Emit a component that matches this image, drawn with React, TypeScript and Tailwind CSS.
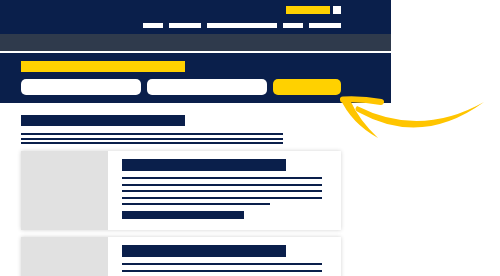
const navy = 'bg-[#0a1f4b]';

const Line = ({ w }: { w: string }) => <div className={`h-[2px] ${navy} ${w}`} />;

const ResultCard = () => (
  <div className="flex w-[320px] h-[79px] bg-white shadow-[0_0_4px_rgba(0,0,0,0.18)]">
    <div className="w-[87px] h-full bg-[#e1e1e1]" />
    <div className="pl-[14px] pt-[8px] flex flex-col">
      <div className={`w-[164px] h-[12px] ${navy}`} />
      <div className="flex flex-col gap-[4.5px] mt-[6px]">
        <Line w="w-[200px]" />
        <Line w="w-[200px]" />
        <Line w="w-[200px]" />
        <Line w="w-[200px]" />
        <Line w="w-[148px]" />
      </div>
      <div className={`w-[122px] h-[8px] mt-[6px] ${navy}`} />
    </div>
  </div>
);

export default function App() {
  return (
    <div className="relative w-[500px] h-[276px] overflow-hidden bg-white">
      <div className="w-[391px]">
        {/* top bar */}
        <div className={`${navy} h-[34px] flex flex-col items-end pr-[50px] pt-[6px]`}>
          <div className="flex gap-[3px]">
            <div className="w-[44px] h-[8px] bg-[#ffd100]" />
            <div className="w-[8px] h-[8px] bg-white" />
          </div>
          <div className="flex gap-[6px] mt-[9px]">
            <div className="w-[20px] h-[5px] bg-white" />
            <div className="w-[32px] h-[5px] bg-white" />
            <div className="w-[70px] h-[5px] bg-white" />
            <div className="w-[20px] h-[5px] bg-white" />
            <div className="w-[32px] h-[5px] bg-white" />
          </div>
        </div>
        <div className="h-[17px] bg-[#2f3a4c]" />
        <div className="h-[2px] bg-white" />
        {/* search */}
        <div className={`${navy} h-[50px] pl-[21px] pt-[8px]`}>
          <div className="w-[164px] h-[11px] bg-[#ffd100]" />
          <div className="flex gap-[6px] mt-[7px]">
            <div className="w-[120px] h-[16px] rounded-[5px] bg-white" />
            <div className="w-[120px] h-[16px] rounded-[5px] bg-white" />
            <div className="w-[68px] h-[16px] rounded-[5px] bg-[#ffd100]" />
          </div>
        </div>
      </div>

      {/* results */}
      <div className="pl-[21px] pt-[12px]">
        <div className={`w-[164px] h-[11px] ${navy}`} />
        <div className="flex flex-col gap-[2.5px] mt-[7px]">
          <Line w="w-[262px]" />
          <Line w="w-[262px]" />
          <Line w="w-[262px]" />
        </div>
        <div className="flex flex-col gap-[7px] mt-[7px]">
          <ResultCard />
          <ResultCard />
        </div>
      </div>

      {/* arrow */}
      <svg className="absolute left-0 top-0" width="500" height="276" viewBox="0 0 500 276">
        <g fill="#ffc500">
          <path d="M357 106 Q 420 138 484 102 Q 422 147 359 112.5 Q 353 110 357 106 Z" />
          <path d="M340 98 L 350 100 Q 359 120 378 138 Q 351 123 340 98 Z" />
        </g>
        <path d="M343 99.5 Q 362 98.5 381 102" stroke="#ffc500" strokeWidth="6" strokeLinecap="round" fill="none" />
      </svg>
    </div>
  );
}
